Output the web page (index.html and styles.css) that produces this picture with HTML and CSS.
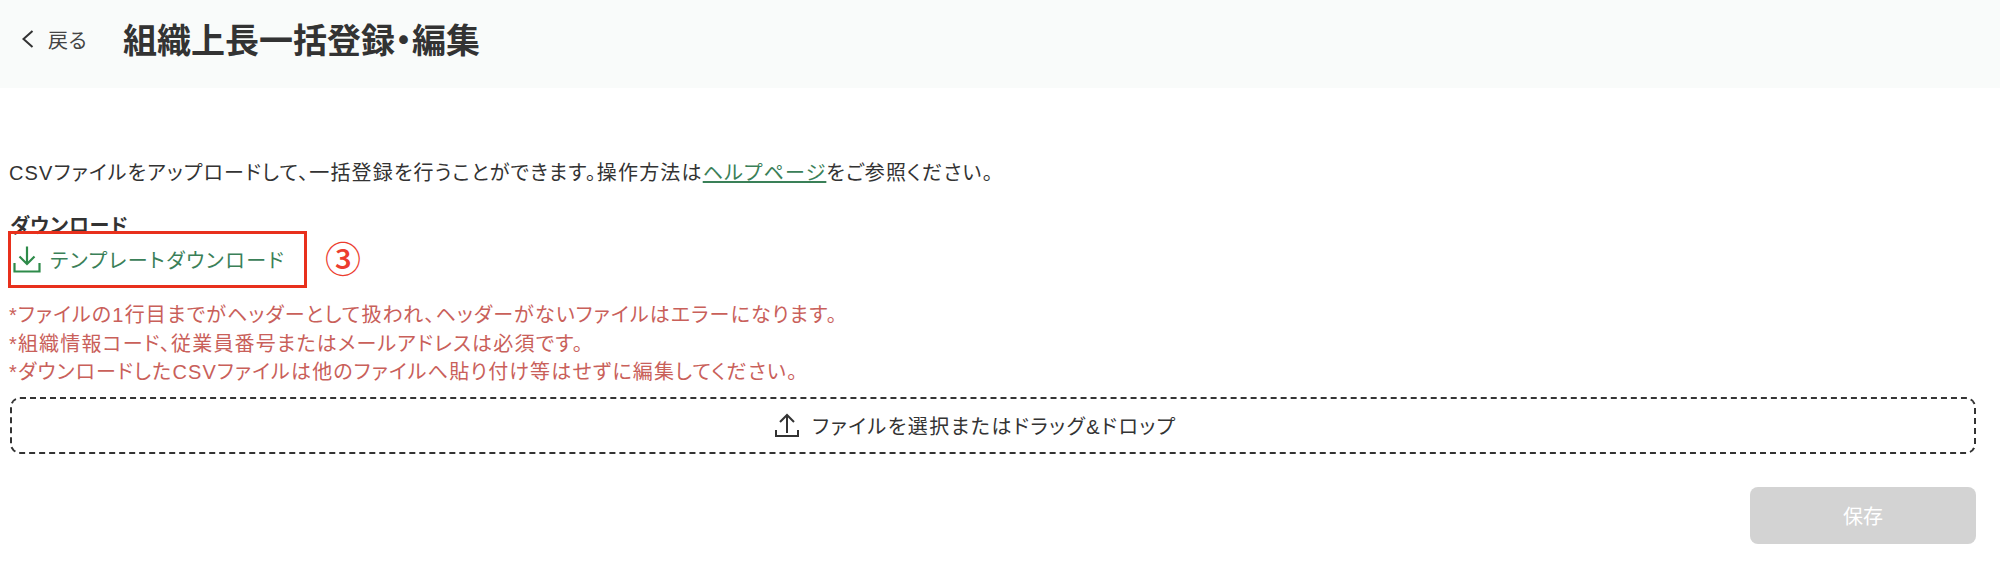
FILE: index.html
```html
<!DOCTYPE html>
<html lang="ja">
<head>
<meta charset="utf-8">
<title>組織上長一括登録・編集</title>
<link rel="stylesheet" href="styles.css">
</head>
<body>
<header class="header">
  <a class="back">
    <svg class="back-icon" viewBox="0 0 16 24"><path d="M12.5 4 L3.5 12 L12.5 20" /></svg>
    <span>戻る</span>
  </a>
  <h1 class="title">組織上長一括登録・編集</h1>
</header>
<main class="main">
  <p class="intro">CSVファイルをアップロードして、一括登録を行うことができます。操作方法は<a class="help">ヘルプページ</a>をご参照ください。</p>
  <h2 class="section-title">ダウンロード</h2>
  <div class="download-row">
    <a class="download">
      <svg class="download-icon" viewBox="0 0 28 28"><path d="M14 1.5 V19 M6.5 11.5 L14 19 L21.5 11.5 M1.5 18 V26.5 H26.5 V18" /></svg>
      <span>テンプレートダウンロード</span>
    </a>
    <div class="callout"></div>
    <span class="callout-num">③</span>
  </div>
  <ul class="notes">
    <li>*ファイルの1行目までがヘッダーとして扱われ、ヘッダーがないファイルはエラーになります。</li>
    <li>*組織情報コード、従業員番号またはメールアドレスは必須です。</li>
    <li>*ダウンロードしたCSVファイルは他のファイルへ貼り付け等はせずに編集してください。</li>
  </ul>
  <div class="dropzone">
    <svg class="upload-icon" viewBox="0 0 24 24"><path d="M12 20 V2.5 M5 9 L12 2 L19 9 M1 17 V23 H23 V17" /></svg>
    <span class="dropzone-label">ファイルを選択またはドラッグ&amp;ドロップ</span>
  </div>
  <div class="actions">
    <button class="save" disabled>保存</button>
  </div>
</main>
</body>
</html>
```
FILE: styles.css
```css
* { box-sizing: border-box; }
html, body { margin: 0; padding: 0; background: #fff; }
body {
  font-family: "Liberation Sans", "Noto Sans CJK JP", sans-serif;
  color: #333;
  font-size: 20px;
  height: 561px;
  overflow: hidden;
  font-feature-settings: "palt";
}
.header {
  height: 88px;
  background: #f9fbfa;
  display: flex;
  align-items: center;
  padding: 0 0 6px 20px;
}
.back {
  display: flex;
  align-items: center;
  gap: 12px;
  font-size: 20px;
  letter-spacing: .7px;
  width: 103px;
  margin-bottom: 4px;
  color: #444;
}
.back-icon { width: 16px; height: 24px; flex: none; }
.back-icon path { fill: none; stroke: #333; stroke-width: 2; }
.title {
  margin: 0;
  font-size: 34px;
  font-weight: 700;
  line-height: 48px;
  color: #333;
}
.main { padding: 0 24px 0 10px; }
.intro {
  margin: 70px 0 0 -1px;
  line-height: 30px;
  font-size: 20px;
  letter-spacing: 1.17px;
}
.help { color: #3a8058; text-decoration: underline; }
.section-title {
  margin: 23px 0 0 0;
  font-size: 20px;
  font-weight: 700;
  line-height: 30px;
  letter-spacing: .7px;
}
.download-row {
  position: relative;
  height: 36px;
  display: flex;
  align-items: center;
}
.download {
  display: flex;
  align-items: center;
  gap: 9px;
  color: #3a8058;
  font-size: 20px;
  letter-spacing: 1.65px;
  margin-left: 3px;
}
.download-icon { width: 28px; height: 28px; flex: none; }
.download-icon path { fill: none; stroke: #2e8b4a; stroke-width: 2.2; }
.callout {
  position: absolute;
  left: -2px;
  top: -10px;
  width: 299px;
  height: 57px;
  border: 3px solid #e8301c;
}
.callout-num {
  position: absolute;
  left: 315px;
  top: -4px;
  font-size: 36px;
  font-weight: 500;
  line-height: 48px;
  color: #ec3d2f;
}
.notes {
  list-style: none;
  margin: 24px 0 0 -1px;
  padding: 0;
  color: #c9605a;
  font-size: 20px;
  line-height: 28.5px;
  letter-spacing: 1.17px;
}
.dropzone {
  margin-top: 10px;
  height: 57px;
  border: 2px dashed #333;
  border-radius: 10px;
  display: flex;
  align-items: center;
  justify-content: center;
  gap: 13px;
  padding-right: 34px;
  font-size: 20px;
}
.dropzone-label { letter-spacing: 1.55px; }
.upload-icon { width: 24px; height: 24px; flex: none; }
.upload-icon path { fill: none; stroke: #333; stroke-width: 2; }
.actions {
  margin-top: 33px;
  display: flex;
  justify-content: flex-end;
}
.save {
  width: 226px;
  height: 57px;
  border: none;
  border-radius: 8px;
  background: #d3d3d3;
  color: #fff;
  font: inherit;
  font-size: 20px;
}
```
